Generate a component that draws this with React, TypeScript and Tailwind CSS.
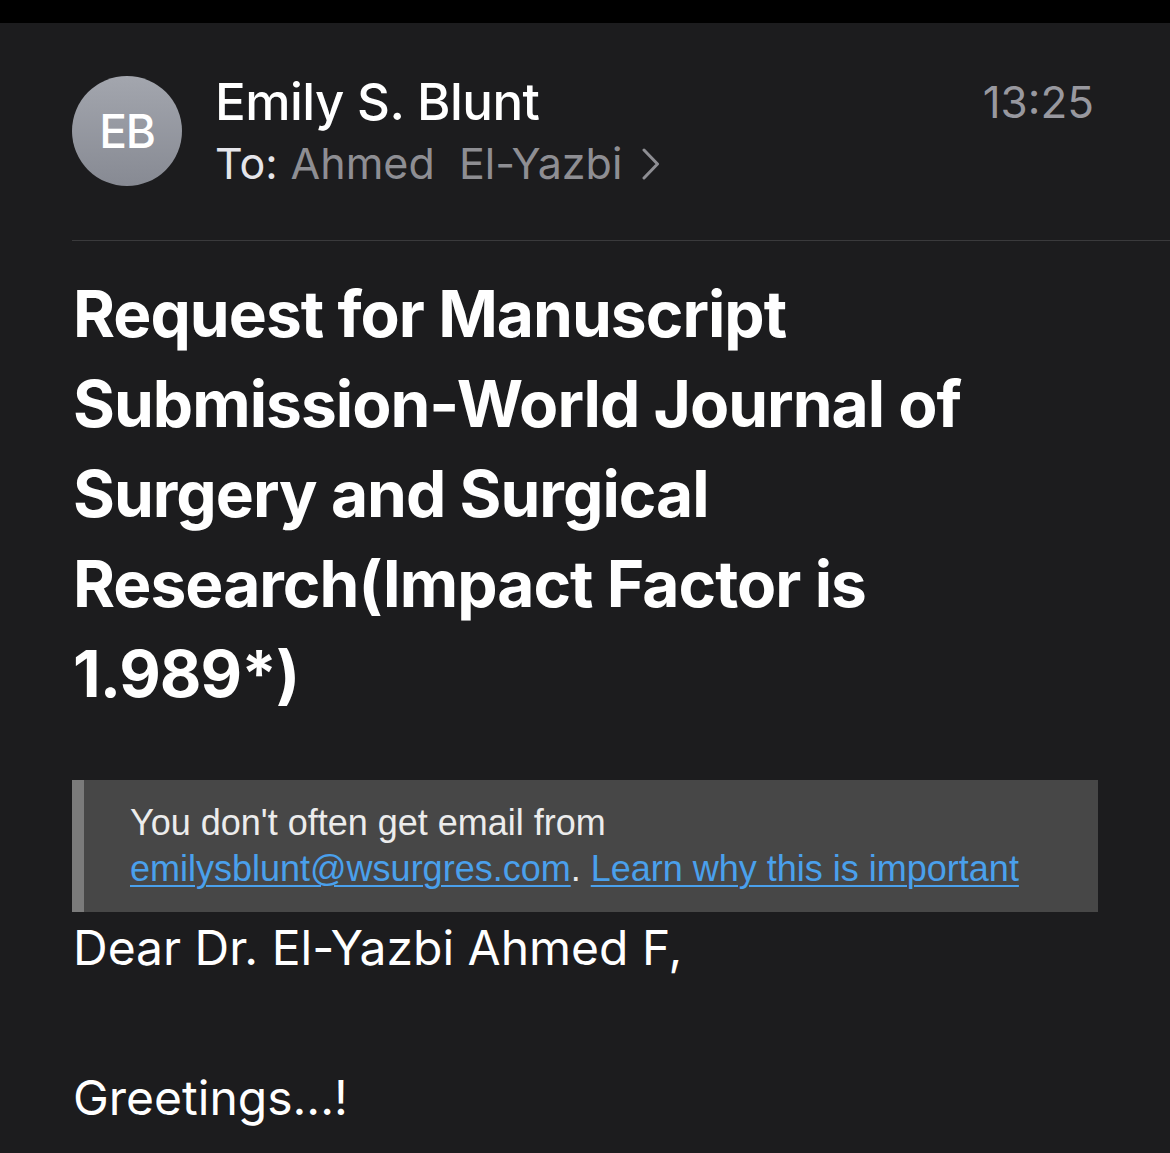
const sf = { fontFamily: "Inter, 'Noto Sans', sans-serif" };

export default function App() {
  return (
    <div className="min-h-screen w-[1170px] bg-[#1c1c1e] text-white" style={sf}>
      <div className="h-[23px] bg-black" />

      {/* header */}
      <div className="flex items-start pl-[72px] pr-[76px] pt-[53px]">
        <div className="flex h-[110px] w-[110px] shrink-0 items-center justify-center rounded-full bg-gradient-to-b from-[#a3a6ae] to-[#878a93]">
          <span className="text-[46px] font-medium tracking-tight text-white">EB</span>
        </div>
        <div className="ml-[33px] -mt-[2px] flex-1">
          <div className="flex items-start justify-between">
            <h1 className="text-[51px] font-medium leading-[56px] tracking-[-0.01em]">Emily S. Blunt</h1>
            <span className="text-[44px] leading-[56px] text-[#98989f]">13:25</span>
          </div>
          <div className="mt-[7px] flex items-center text-[43px] leading-[52px]">
            <span className="text-[#e5e5ea]">To:</span>
            <span className="ml-[13px] text-[#8e8e93]">Ahmed&nbsp;&nbsp;El-Yazbi</span>
            <svg className="ml-[20px] mt-[2px]" width="18" height="32" viewBox="0 0 18 32" fill="none">
              <polyline points="2,2 15.5,16 2,30" stroke="#8e8e93" strokeWidth="3" strokeLinecap="round" strokeLinejoin="round" />
            </svg>
          </div>
        </div>
      </div>

      <div className="ml-[72px] mt-[51px] h-[1px] bg-[#3a3a3c]" />

      {/* subject */}
      <h2 className="mt-[28px] pl-[73px] pr-[150px] text-[64px] font-bold leading-[90px] tracking-[-0.015em]">
        Request for Manuscript Submission-World Journal of Surgery and Surgical Research(Impact Factor is 1.989*)
      </h2>

      {/* external sender banner */}
      <div className="ml-[72px] mr-[72px] mt-[61px] flex border-l-[12px] border-[#7b7b7b] bg-[#474747] py-[20px] pl-[46px] pr-[20px]">
        <p className="text-[36px] leading-[46px] text-[#ececec]" style={{ fontFamily: "'Liberation Sans', Arial, sans-serif" }}>
          You don't often get email from
          <br />
          <span className="text-[#4aa0ec] underline decoration-2 underline-offset-4">emilysblunt@wsurgres.com</span>
          .{" "}
          <span className="text-[#4aa0ec] underline decoration-2 underline-offset-4">Learn why this is important</span>
        </p>
      </div>

      {/* body */}
      <div className="-mt-[2px] pl-[73px] text-[48px] leading-[75px] text-white">
        <p>Dear Dr. El-Yazbi Ahmed F,</p>
        <p>&nbsp;</p>
        <p>Greetings...!</p>
      </div>
    </div>
  );
}
